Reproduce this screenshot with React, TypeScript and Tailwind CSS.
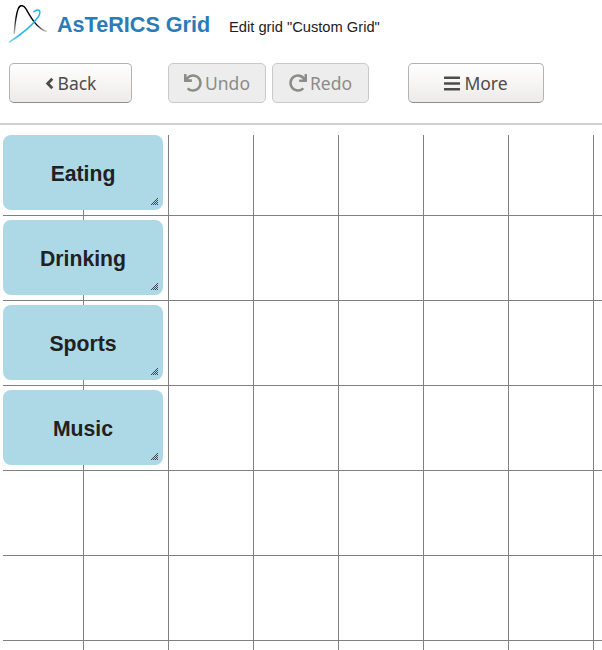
import React from "react";
import { FaRedo, FaUndo } from "react-icons/fa";

const categories = ["Eating", "Drinking", "Sports", "Music"];

function Logo() {
  return (
    <svg className="ml-[8px] mt-[3px] h-[42px] w-[42px] shrink-0" viewBox="8 3 42 42" fill="none" strokeLinecap="round">
      <defs>
        <linearGradient id="rise" x1="0" y1="34" x2="0" y2="5" gradientUnits="userSpaceOnUse">
          <stop offset="0" stopColor="#000" stopOpacity=".25" />
          <stop offset=".6" stopColor="#000" />
        </linearGradient>
        <linearGradient id="fall" x1="21" y1="5" x2="46" y2="31" gradientUnits="userSpaceOnUse">
          <stop offset=".7" stopColor="#000" />
          <stop offset="1" stopColor="#000" stopOpacity=".25" />
        </linearGradient>
        <linearGradient id="sweep" x1="9" y1="42" x2="40" y2="10" gradientUnits="userSpaceOnUse">
          <stop offset="0" stopColor="#20b5ed" stopOpacity=".5" />
          <stop offset=".25" stopColor="#20b5ed" />
        </linearGradient>
      </defs>
      <path d="M14.2 33.5C14.8 27 15.6 16 18 9.3C19 6.6 20.2 5.6 21.5 5.6" stroke="url(#rise)" strokeWidth="1.4" />
      <path d="M19 7.5C20.8 4.5 23.7 5.3 25.8 8.7C30.2 16 36 27.7 46.2 31.4" stroke="url(#fall)" strokeWidth="1.4" />
      <path d="M9.5 42C18 36.5 31.5 26.5 37.8 17.5C41.8 11.5 39.8 7.7 33.8 11.6" stroke="url(#sweep)" strokeWidth="1.5" />
    </svg>
  );
}

function ChevronIcon() {
  return (
    <svg className="h-[13px] w-[9px]" viewBox="0 0 9 13" fill="none" stroke="currentColor" strokeWidth="2.8">
      <path d="M7.3 1.8 2.7 6.5l4.6 4.7" />
    </svg>
  );
}

function BarsIcon() {
  return (
    <svg className="h-[15px] w-4" viewBox="0 0 16 15" fill="currentColor">
      <rect y=".6" width="16" height="2.5" rx=".3" />
      <rect y="6.3" width="16" height="2.5" rx=".3" />
      <rect y="12" width="16" height="2.5" rx=".3" />
    </svg>
  );
}

type ButtonProps = {
  icon: React.ReactNode;
  label: string;
  className: string;
  disabled?: boolean;
};

function ToolButton({ icon, label, className, disabled }: ButtonProps) {
  const tone = disabled
    ? "border-[#c9c9c9] bg-[#ededed] text-[#8c8b85]"
    : "border-[#b3b3b3] border-b-[#8d8d8d] bg-linear-to-b from-white to-[#edebe9] text-[#4c4c4c]";
  return (
    <button
      disabled={disabled}
      className={`flex h-10 items-center justify-center rounded-[5px] border font-['Noto_Sans',sans-serif] text-[17.5px] leading-none ${tone} ${className}`}
    >
      {icon}
      <span className="pt-[2px]">{label}</span>
    </button>
  );
}

function ResizeGrip() {
  return (
    <svg className="absolute right-[5px] bottom-[5px] h-[7px] w-[7px]" viewBox="0 0 7 7" shapeRendering="crispEdges" fill="#3d474b">
      {[0, 1, 2, 3, 4, 5, 6].flatMap((y) =>
        [0, 1, 2, 3, 4, 5, 6]
          .filter((x) => x + y >= 6 && (x + y) % 2 === 0)
          .map((x) => <rect key={`${x}-${y}`} x={x} y={y} width="1" height="1" />),
      )}
    </svg>
  );
}

export default function App() {
  return (
    <div className="flex h-[650px] w-[602px] flex-col overflow-hidden bg-white font-['Liberation_Sans',Arial,sans-serif] text-[#212121]">
      <header className="flex h-[63px] items-start">
        <Logo />
        <h1 className="ml-[7px] mt-[11px] w-[172px] whitespace-nowrap text-[21.6px] leading-[28px] font-bold text-[#2b7bb9]">AsTeRICS Grid</h1>
        <h2 className="mt-[17px] whitespace-nowrap text-[14.7px] leading-5">Edit grid "Custom Grid"</h2>
      </header>
      <nav className="flex h-[62px] items-start border-b-2 border-[#cfcfcf] pl-[9px]">
        <ToolButton className="w-[123px] gap-[4px]" icon={<ChevronIcon />} label="Back" />
        <ToolButton disabled className="ml-9 w-[98px] gap-[3px]" icon={<FaUndo className="h-[18px] w-[18px]" />} label="Undo" />
        <ToolButton disabled className="ml-[6px] w-[97px] gap-[3px]" icon={<FaRedo className="h-[18px] w-[18px]" />} label="Redo" />
        <ToolButton className="ml-[39px] w-[136px] gap-[4px]" icon={<BarsIcon />} label="More" />
      </nav>
      <main className="mt-[10px] ml-[3px] flex-1 bg-[linear-gradient(to_right,transparent_84px,#808080_84px),linear-gradient(to_bottom,transparent_84px,#808080_84px)] bg-[size:85px_85px] bg-[position:-4px_-4px]">
        <ul className="flex w-40 flex-col gap-[10px]">
          {categories.map((name) => (
            <li key={name} className="relative flex h-[75px] items-center justify-center rounded-[8px] bg-[#add8e6] pt-[2px] text-[21.2px] leading-[25px] font-bold">
              {name}
              <ResizeGrip />
            </li>
          ))}
        </ul>
      </main>
    </div>
  );
}
